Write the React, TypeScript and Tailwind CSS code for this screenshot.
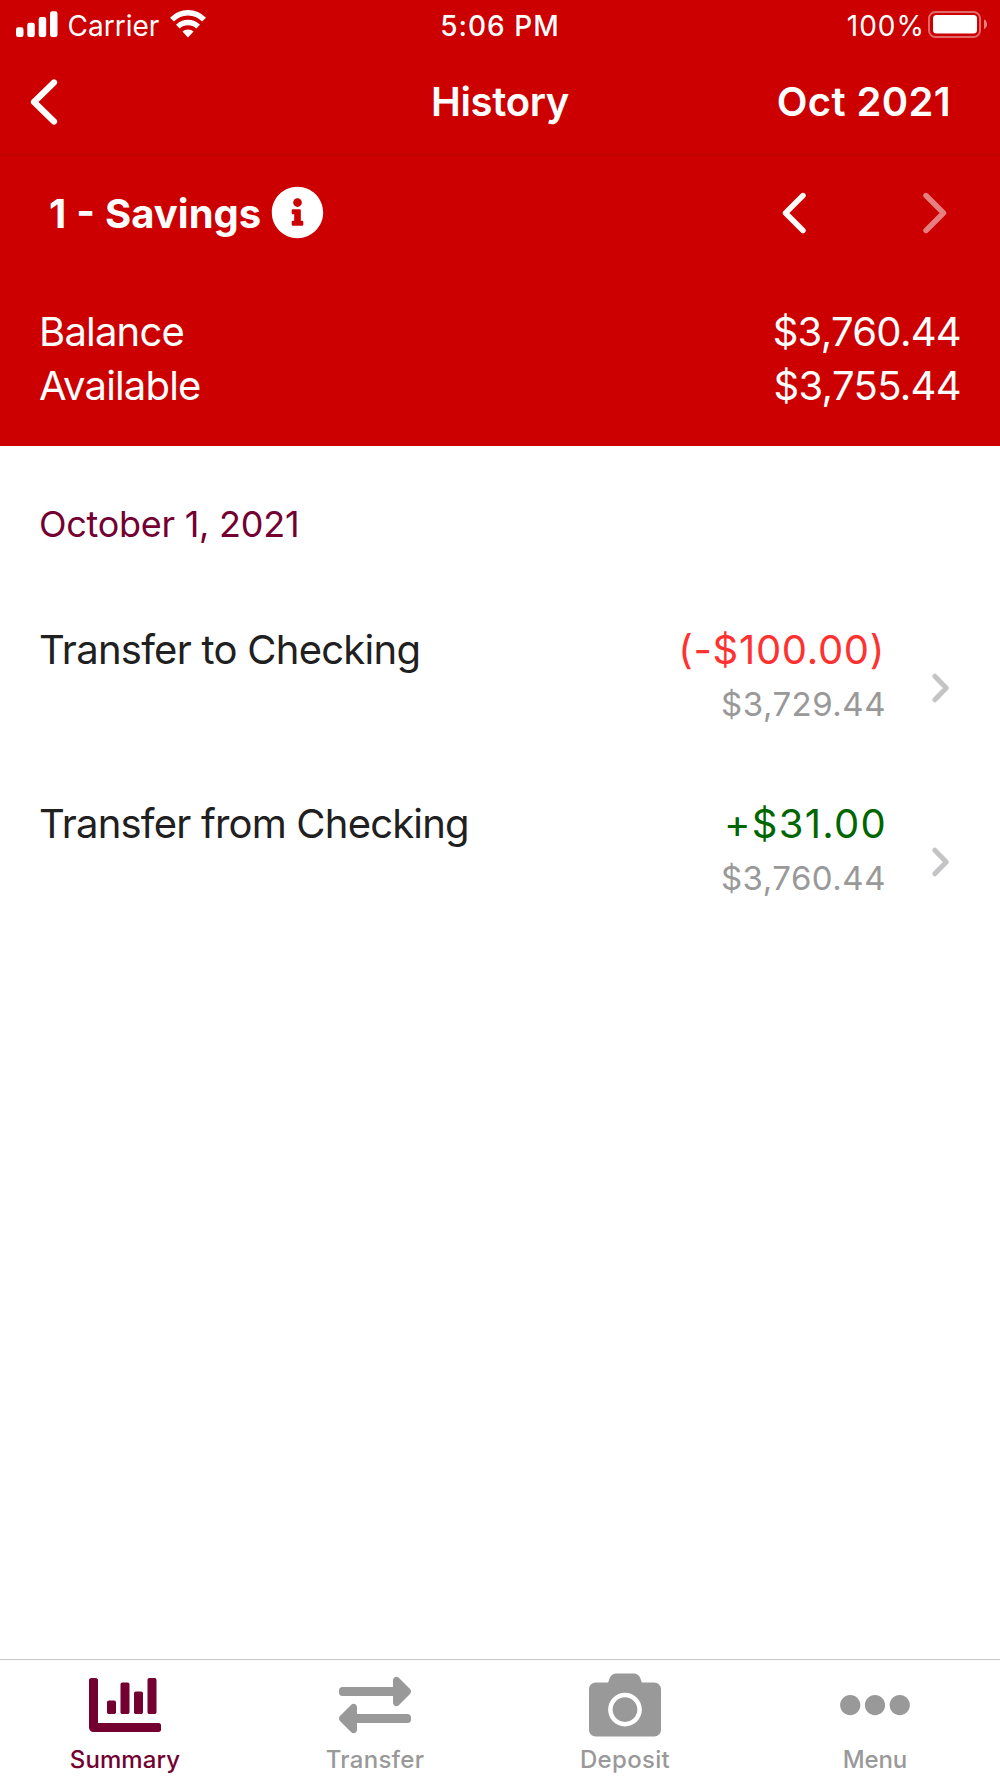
import type { IconType } from "react-icons";
import { FaCamera, FaChartBar, FaEllipsisH, FaExchangeAlt, FaInfoCircle } from "react-icons/fa";

type Transaction = {
  description: string;
  descriptionClass: string;
  amount: string;
  amountClass: string;
  balance: string;
};

const transactions: Transaction[] = [
  {
    description: "Transfer to Checking",
    descriptionClass: "tracking-[-0.73px]",
    amount: "(-$100.00)",
    amountClass: "mr-px tracking-[0.68px] text-[#ff3232]",
    balance: "$3,729.44",
  },
  {
    description: "Transfer from Checking",
    descriptionClass: "tracking-[-0.8px]",
    amount: "+$31.00",
    amountClass: "-mr-px tracking-[1.28px] text-[#006600]",
    balance: "$3,760.44",
  },
];

type Tab = {
  label: string;
  labelClass: string;
  icon: IconType;
};

const tabs: Tab[] = [
  { label: "Summary", labelClass: "tracking-[0.1px] text-[#740032]", icon: FaChartBar },
  { label: "Transfer", labelClass: "tracking-[0.28px] text-[#999999]", icon: FaExchangeAlt },
  { label: "Deposit", labelClass: "tracking-[0.3px] text-[#999999]", icon: FaCamera },
  { label: "Menu", labelClass: "tracking-[-0.15px] text-[#999999]", icon: FaEllipsisH },
];

function StatusBar() {
  return (
    <div className="grid h-[50px] grid-cols-[1fr_auto_1fr] items-center px-[13px] text-[28px] leading-none">
      <div className="flex items-center pl-[3px]">
        <svg width="42" height="28" viewBox="0 0 42 28" fill="currentColor" className="mr-[9.5px]">
          <rect x="0" y="16.3" width="7.5" height="9.7" rx="2.2" />
          <rect x="11.3" y="11.7" width="7.5" height="14.3" rx="2.2" />
          <rect x="22.7" y="6" width="7.5" height="20" rx="2.2" />
          <rect x="34" y="0.2" width="7.5" height="25.8" rx="2.2" />
        </svg>
        <span className="pt-px">Carrier</span>
        <svg width="36" height="30" viewBox="0 0 36 30" fill="none" className="ml-[11px]">
          <path d="M2 9.7A21.8 21.8 0 0 1 34 9.7" stroke="currentColor" strokeWidth="5.4" />
          <path d="M7.9 16.6A14.5 14.5 0 0 1 28.1 16.6" stroke="currentColor" strokeWidth="5.4" />
          <path d="M18 27.4L12.4 21.6A8.4 8.4 0 0 1 23.6 21.6Z" fill="currentColor" />
        </svg>
      </div>
      <div className="pt-px font-medium tracking-[1px]">5:06 PM</div>
      <div className="flex items-center justify-end">
        <span className="pt-px tracking-[1px]">100%</span>
        <svg width="59" height="28" viewBox="0 0 59 28" fill="none" className="ml-[3px]">
          <rect x="1" y="1" width="51" height="25" rx="6.5" stroke="currentColor" strokeWidth="2" opacity="0.42" />
          <rect x="5" y="4" width="44" height="18.5" rx="3.5" fill="currentColor" />
          <path d="M56 8.3C60 10.3 60 16.3 56 18.3Z" fill="currentColor" opacity="0.5" />
        </svg>
      </div>
    </div>
  );
}

function NavBar() {
  return (
    <div className="grid h-[105px] grid-cols-[1fr_auto_1fr] items-center border-b border-[#b50000] px-[49px] text-[40px] leading-none font-semibold">
      <svg width="30" height="48" viewBox="0 0 30 48" fill="none" stroke="currentColor" className="-mt-px -ml-5">
        <path d="M25 4.5L5 24L25 43.5" strokeWidth="6.2" strokeLinecap="round" strokeLinejoin="round" />
      </svg>
      <div className="tracking-[-0.31px]">History</div>
      <div className="text-right tracking-[0.36px]">Oct 2021</div>
    </div>
  );
}

function AccountSummary() {
  return (
    <div className="px-[39px] pb-[33px] text-[40px] leading-[54px]">
      <div className="flex h-[115px] items-center pr-[14px] pl-[10px]">
        <span className="pt-0.5 leading-none font-bold [word-spacing:0.6px]">1 - Savings</span>
        <FaInfoCircle size={53} className="ml-[10px]" />
        <svg width="24" height="42" viewBox="0 0 24 42" fill="none" stroke="currentColor" className="ml-auto">
          <path d="M21 3.5L3.5 21L21 38.5" strokeWidth="5.4" strokeLinecap="round" strokeLinejoin="round" />
        </svg>
        <svg width="24" height="42" viewBox="0 0 24 42" fill="none" stroke="currentColor" className="ml-[117px] opacity-50">
          <path d="M3 3.5L20.5 21L3 38.5" strokeWidth="5.4" strokeLinecap="round" strokeLinejoin="round" />
        </svg>
      </div>
      <div className="flex justify-between pt-[35px]">
        <span className="tracking-[-0.79px]">Balance</span>
        <span className="tracking-[-0.7px]">$3,760.44</span>
      </div>
      <div className="flex justify-between">
        <span className="tracking-[-0.83px]">Available</span>
        <span className="tracking-[-0.65px]">$3,755.44</span>
      </div>
    </div>
  );
}

function TransactionRow({ transaction }: { transaction: Transaction }) {
  const { description, descriptionClass, amount, amountClass, balance } = transaction;

  return (
    <div className="flex h-[174px] items-start pt-[22px] pr-[50px] pl-[39px] text-[40px] leading-[54px]">
      <span className={`flex-1 ${descriptionClass}`}>{description}</span>
      <div className="mr-[44px] flex flex-col items-end">
        <span className={amountClass}>{amount}</span>
        <span className="text-[33px] tracking-[0.5px] text-[#999999]">{balance}</span>
      </div>
      <svg width="20" height="34" viewBox="0 0 20 34" fill="none" className="mt-12">
        <path d="M4.8 5.2L16.3 17L4.8 28.8" stroke="#c4c4c6" strokeWidth="5" strokeLinecap="round" strokeLinejoin="round" />
      </svg>
    </div>
  );
}

function TabBar() {
  return (
    <div className="grid h-[119px] grid-cols-4 border-t border-[#c6c6c6]">
      {tabs.map(({ label, labelClass, icon: Icon }) => (
        <div key={label} className={`flex flex-col items-center pt-[9px] text-[24px] leading-none font-medium ${labelClass}`}>
          <Icon size={72} />
          <span className="mt-[7px]">{label}</span>
        </div>
      ))}
    </div>
  );
}

export default function App() {
  return (
    <div className="flex h-[1778px] w-[1000px] flex-col bg-white font-['Inter',sans-serif]">
      <header className="bg-[#cc0000] text-white">
        <StatusBar />
        <NavBar />
        <AccountSummary />
      </header>
      <main className="flex-1 text-[#202020]">
        <div className="flex h-[155px] items-center pl-[39px] text-[36px] tracking-[-0.26px] text-[#740032]">
          October 1, 2021
        </div>
        {transactions.map((transaction) => (
          <TransactionRow key={transaction.description} transaction={transaction} />
        ))}
      </main>
      <TabBar />
    </div>
  );
}
